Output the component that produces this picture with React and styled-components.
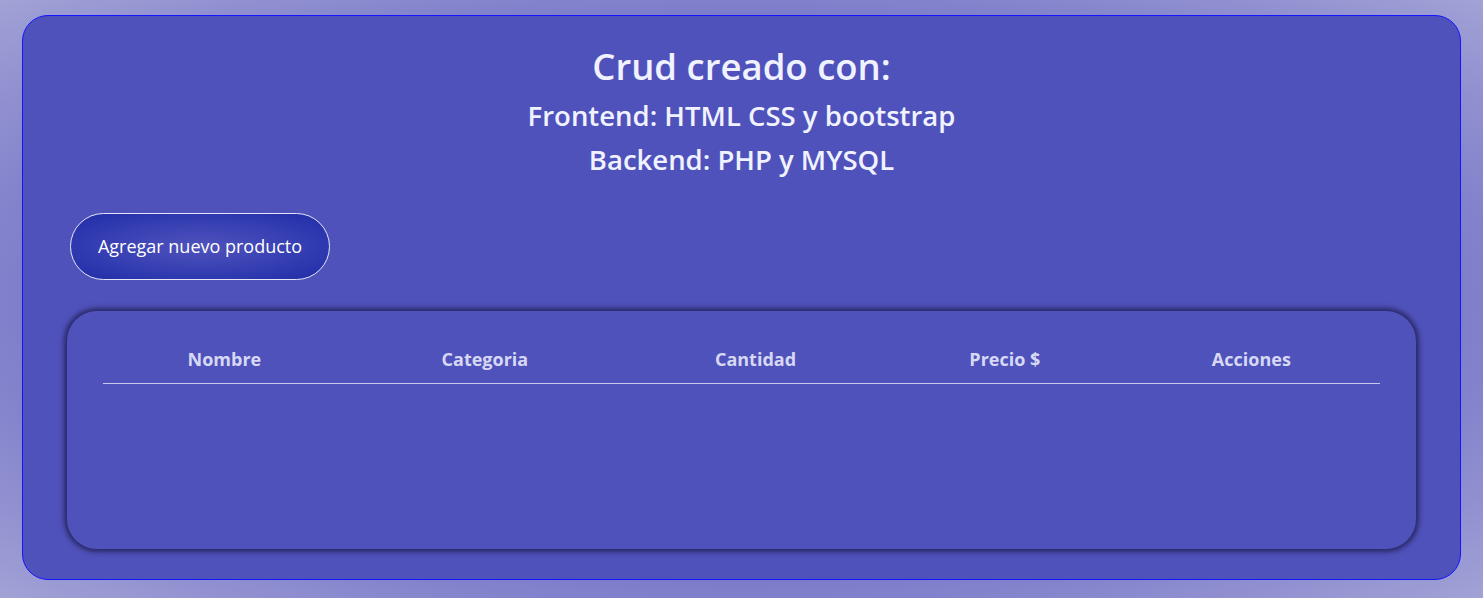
import React from 'react';
import styled, { createGlobalStyle } from 'styled-components';

const GlobalStyle = createGlobalStyle`
  html, body {
    margin: 0;
    padding: 0;
    height: 100%;
  }
  body {
    font-family: "Open Sans", "Noto Sans", sans-serif;
    background: radial-gradient(ellipse at center, #5656be 0%, #6e6ec6 55%, #a2a2d6 100%);
    min-height: 598px;
  }
`;

const Page = styled.div`
  padding: 15px 22px 18px;
`;

const Card = styled.div`
  background-color: #5052bb;
  border: 1px solid #1414ff;
  border-radius: 26px;
  padding: 24px 44px 30px;
  height: 565px;
  box-sizing: border-box;
  display: flex;
  flex-direction: column;
`;

const Header = styled.header`
  text-align: center;
  color: #f0f2ff;
`;

const Title = styled.h1`
  margin: 0 0 2px;
  font-size: 36.5px;
  font-weight: 600;
  line-height: 52px;
`;

const Subtitle = styled.h2`
  margin: 0;
  font-size: 27.5px;
  font-weight: 600;
  line-height: 44px;
`;

const Button = styled.button`
  align-self: flex-start;
  margin: 31px 0 0 3px;
  width: 260px;
  height: 67px;
  border-radius: 34px;
  border: 1px solid #e4e4f8;
  color: #ffffff;
  font-family: inherit;
  font-size: 18px;
  cursor: pointer;
  background: radial-gradient(ellipse at center, #5052bb 0%, #3a42b4 45%, #1f2ca8 100%);
`;

const TableBox = styled.div`
  margin-top: 31px;
  height: 239px;
  box-sizing: border-box;
  border-radius: 30px;
  padding: 28px 36px 0;
  background-color: #5052bb;
  box-shadow: 0 0 5px 3px rgba(30, 30, 80, 0.8);
`;

const Table = styled.table`
  width: 100%;
  border-collapse: collapse;
`;

const Th = styled.th`
  color: #d6d8f4;
  font-size: 18px;
  font-weight: 700;
  padding: 8px 8px 12px;
  border-bottom: 1px solid #c8c8f0;
  text-align: center;
`;

const columns = ['Nombre', 'Categoria', 'Cantidad', 'Precio $', 'Acciones'];

const App = () => {
  return (
    <Page>
      <GlobalStyle />
      <Card>
        <Header>
          <Title>Crud creado con:</Title>
          <Subtitle>Frontend: HTML CSS y bootstrap</Subtitle>
          <Subtitle>Backend: PHP y MYSQL</Subtitle>
        </Header>
        <Button>Agregar nuevo producto</Button>
        <TableBox>
          <Table>
            <thead>
              <tr>
                {columns.map((c) => (
                  <Th key={c}>{c}</Th>
                ))}
              </tr>
            </thead>
            <tbody></tbody>
          </Table>
        </TableBox>
      </Card>
    </Page>
  );
};

export default App;
